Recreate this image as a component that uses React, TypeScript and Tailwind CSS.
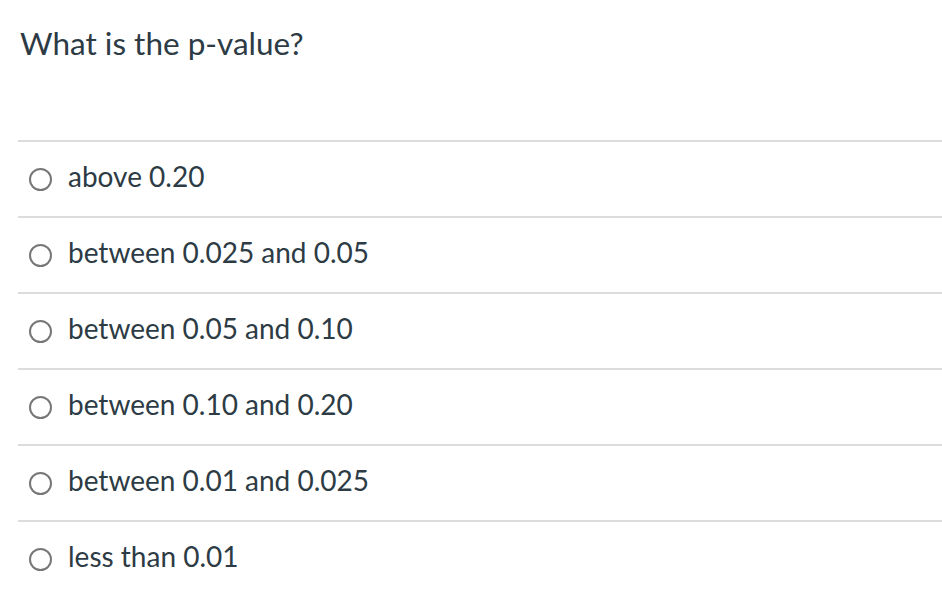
const options = [
  'above 0.20',
  'between 0.025 and 0.05',
  'between 0.05 and 0.10',
  'between 0.10 and 0.20',
  'between 0.01 and 0.025',
  'less than 0.01',
];

export default function App() {
  return (
    <div
      className="h-[604px] w-[942px] overflow-hidden bg-white text-[#2d3b45]"
      style={{ fontFamily: 'Lato, "Noto Sans", sans-serif' }}
    >
      <div className="pl-[20px] pt-[20px] text-[31.5px] leading-[46px]">What is the p-value?</div>
      <div className="mt-[74px] ml-[18px]">
        {options.map((o) => (
          <div key={o} className="flex h-[76px] items-center border-t-2 border-[#dcdcdc] pl-[11px]">
            <span className="mr-[16px] box-border size-[23px] shrink-0 rounded-full border-2 border-[#777]" />
            <span className="pb-[6px] text-[28px] leading-none">{o}</span>
          </div>
        ))}
      </div>
    </div>
  );
}
